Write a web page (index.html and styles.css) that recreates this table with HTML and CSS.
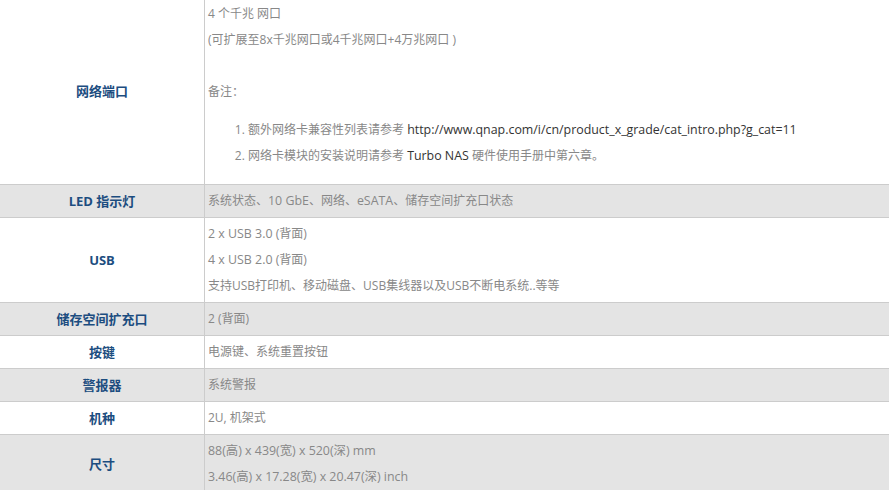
FILE: index.html
```html
<!DOCTYPE html>
<html lang="zh-CN">
<head>
<meta charset="utf-8">
<link rel="stylesheet" href="styles.css">
</head>
<body>
<table class="spec">
  <tr class="row-white">
    <th class="label label-top">网络端口</th>
    <td class="value">
      <p>4 个千兆 网口</p>
      <p>(可扩展至8x千兆网口或4千兆网口+4万兆网口 )</p>
      <p>&nbsp;</p>
      <p>备注：</p>
      <ol class="notes">
        <li>额外网络卡兼容性列表请参考 <span class="dark">http://www.qnap.com/i/cn/product_x_grade/cat_intro.php?g_cat=11</span></li>
        <li>网络卡模块的安装说明请参考 <span class="dark">Turbo NAS</span> 硬件使用手册中第六章。</li>
      </ol>
    </td>
  </tr>
  <tr class="row-gray">
    <th class="label">LED 指示灯</th>
    <td class="value"><p>系统状态、<span class="latin">10 GbE</span>、网络、<span class="latin">eSATA</span>、储存空间扩充口状态</p></td>
  </tr>
  <tr class="row-white">
    <th class="label">USB</th>
    <td class="value">
      <p><span class="latin">2 x USB 3.0 (</span>背面)</p>
      <p><span class="latin">4 x USB 2.0 (</span>背面)</p>
      <p>支持USB打印机、移动磁盘、USB集线器以及USB不断电系统..等等</p>
    </td>
  </tr>
  <tr class="row-gray">
    <th class="label">储存空间扩充口</th>
    <td class="value"><p>2 (背面)</p></td>
  </tr>
  <tr class="row-white">
    <th class="label">按键</th>
    <td class="value"><p>电源键、系统重置按钮</p></td>
  </tr>
  <tr class="row-gray">
    <th class="label">警报器</th>
    <td class="value"><p>系统警报</p></td>
  </tr>
  <tr class="row-white">
    <th class="label">机种</th>
    <td class="value"><p>2U, 机架式</p></td>
  </tr>
  <tr class="row-gray">
    <th class="label">尺寸</th>
    <td class="value">
      <p class="latin">88(高) x 439(宽) x 520(深) mm</p>
      <p class="latin">3.46(高) x 17.28(宽) x 20.47(深) inch</p>
    </td>
  </tr>
</table>
</body>
</html>
```
FILE: styles.css
```css
html, body {
  margin: 0;
  padding: 0;
  background: #ffffff;
}
body {
  font-family: "Open Sans", "Noto Sans CJK SC", sans-serif;
  font-size: 12px;
  line-height: 26px;
  color: #888888;
  overflow: hidden;
}
.spec {
  width: 889px;
  border-collapse: collapse;
  margin-top: -3px;
  table-layout: fixed;
}
.row-white { background: #ffffff; }
.row-gray { background: #e4e4e4; }
.spec th, .spec td {
  border: 1px solid #cccccc;
  padding: 3px 3px;
  vertical-align: middle;
}
.spec tr > :first-child { border-left: none; }
.spec tr > :last-child { border-right: none; }
.label {
  width: 198px;
  text-align: center;
  color: #1c4d80;
  font-weight: bold;
  font-size: 13px;
  padding-top: 1px;
  padding-bottom: 5px;
}
.label-top { padding-top: 0; padding-bottom: 9px; }
.value {
  text-align: left;
  padding-left: 3px;
}
.value p {
  margin: 0;
  white-space: nowrap;
}
.notes {
  margin: 12px 0;
  padding-left: 40px;
}
.notes li { white-space: nowrap; }
.dark {
  color: #333333;
  font-size: 12.4px;
}
.latin { font-size: 12.4px; }
```
